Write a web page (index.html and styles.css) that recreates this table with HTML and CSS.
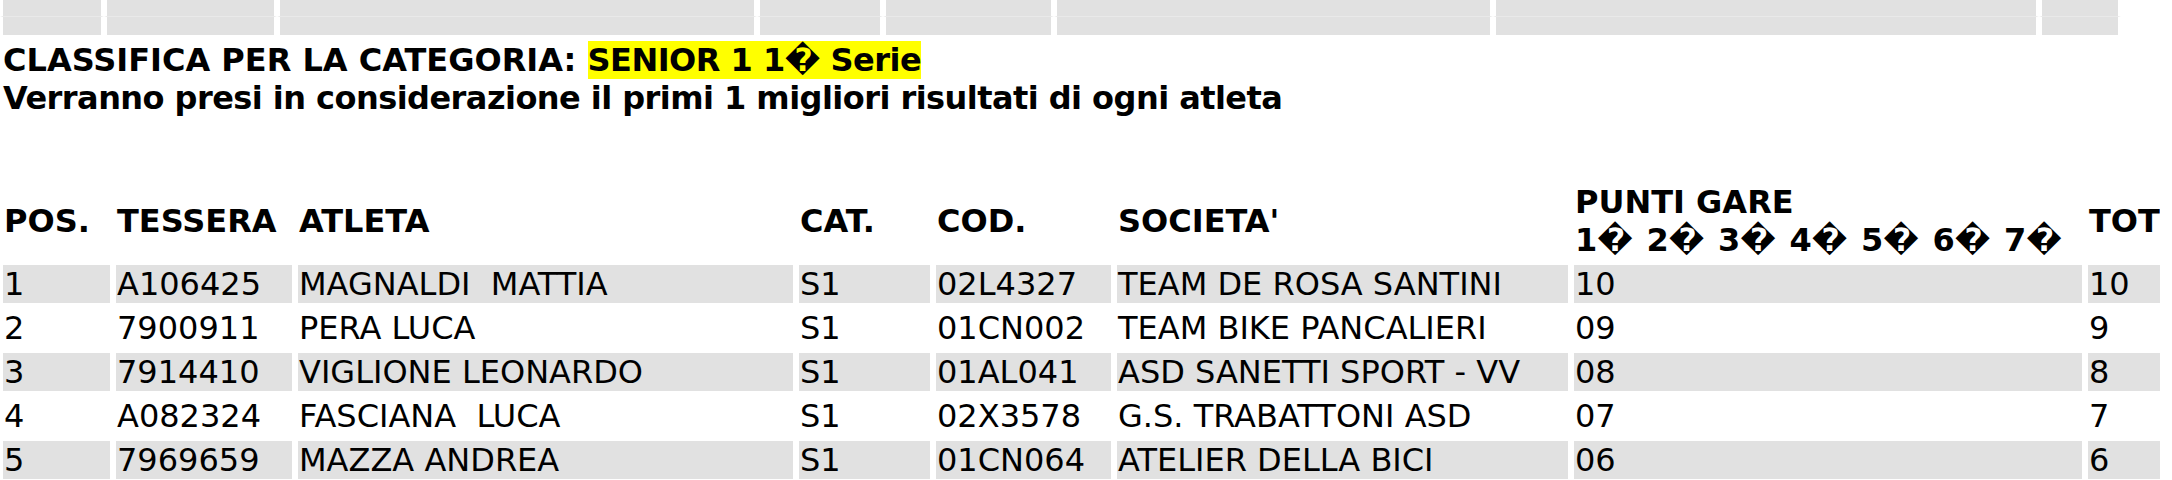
FILE: index.html
```html
<!DOCTYPE html>
<html lang="it">
<head>
<meta charset="utf-8">
<title>Classifica</title>
<link rel="stylesheet" href="styles.css">
</head>
<body>
<table class="top">
  <colgroup>
    <col class="t1"><col class="t2"><col class="t3"><col class="t4"><col class="t5"><col class="t6"><col class="t7"><col class="t8">
  </colgroup>
  <tr class="r1"><td></td><td></td><td></td><td></td><td></td><td></td><td></td><td></td></tr>
  <tr class="r2"><td></td><td></td><td></td><td></td><td></td><td></td><td></td><td></td></tr>
</table>

<div class="heading">
  <div class="line">CLASSIFICA PER LA CATEGORIA: <span class="hl">SENIOR 1 1� Serie</span></div>
  <div class="line tight">Verranno presi in considerazione il primi 1 migliori risultati di ogni atleta</div>
</div>

<table class="rank">
  <colgroup>
    <col class="c-pos"><col class="c-tes"><col class="c-atl"><col class="c-cat"><col class="c-cod"><col class="c-soc"><col class="c-pun"><col class="c-tot">
  </colgroup>
  <thead>
    <tr>
      <th>POS.</th>
      <th>TESSERA</th>
      <th>ATLETA</th>
      <th>CAT.</th>
      <th>COD.</th>
      <th>SOCIETA'</th>
      <th>PUNTI GARE<br><span class="races"><span class="race">1�</span><span class="race">2�</span><span class="race">3�</span><span class="race">4�</span><span class="race">5�</span><span class="race">6�</span><span class="race">7�</span></span></th>
      <th>TOT</th>
    </tr>
  </thead>
  <tbody>
    <tr class="odd"><td>1</td><td>A106425</td><td>MAGNALDI&nbsp; MATTIA</td><td>S1</td><td>02L4327</td><td>TEAM DE ROSA SANTINI</td><td>10</td><td>10</td></tr>
    <tr><td>2</td><td>7900911</td><td>PERA LUCA</td><td>S1</td><td>01CN002</td><td>TEAM BIKE PANCALIERI</td><td>09</td><td>9</td></tr>
    <tr class="odd"><td>3</td><td>7914410</td><td>VIGLIONE LEONARDO</td><td>S1</td><td>01AL041</td><td>ASD SANETTI SPORT - VV</td><td>08</td><td>8</td></tr>
    <tr><td>4</td><td>A082324</td><td>FASCIANA&nbsp; LUCA</td><td>S1</td><td>02X3578</td><td>G.S. TRABATTONI ASD</td><td>07</td><td>7</td></tr>
    <tr class="odd"><td>5</td><td>7969659</td><td>MAZZA ANDREA</td><td>S1</td><td>01CN064</td><td>ATELIER DELLA BICI</td><td>06</td><td>6</td></tr>
  </tbody>
</table>
</body>
</html>
```

FILE: styles.css
```css
html, body {
  margin: 0;
  padding: 0;
  background: #ffffff;
}

body {
  font-family: "DejaVu Sans", Verdana, sans-serif;
  font-size: 32px;
  color: #000000;
}

/* top strip of empty grey cells */
.top {
  border-collapse: separate;
  border-spacing: 0;
  table-layout: fixed;
  width: 2121px;
}
.top td {
  background: #e1e1e1;
  border: 3px solid #ffffff;
  border-top: 0;
  padding: 0;
}
.top .r1 td {
  height: 16px;
  border-bottom: 1px solid #e9e9e9;
}
.top .r2 td {
  height: 18px;
}
.t1 { width: 104px; }
.t2 { width: 173px; }
.t3 { width: 480px; }
.t4 { width: 126px; }
.t5 { width: 171px; }
.t6 { width: 439px; }
.t7 { width: 546px; }
.t8 { width: 82px; }

/* heading */
.heading {
  margin-top: 3px;
  padding-left: 3px;
  font-weight: bold;
  margin-bottom: 63px;
}
.line {
  white-space: nowrap;
}
.tight {
  letter-spacing: -0.55px;
}
.hl {
  background: #ffff00;
  letter-spacing: -0.5px;
}

/* ranking table */
.rank {
  border-collapse: separate;
  border-spacing: 0;
  table-layout: fixed;
  width: 2163px;
}
.rank th,
.rank td {
  border: 3px solid #ffffff;
  padding: 0 1px;
  text-align: left;
  white-space: nowrap;
  overflow: hidden;
}
.rank th {
  font-weight: bold;
  vertical-align: middle;
}
.rank td {
  height: 38px;
  vertical-align: middle;
}
.rank .odd td {
  background: #e1e1e1;
}
.c-pos { width: 113px; }
.c-tes { width: 182px; }
.c-atl { width: 501px; }
.c-cat { width: 137px; }
.c-cod { width: 181px; }
.c-soc { width: 457px; }
.c-pun { width: 514px; }
.c-tot { width: 78px; }

.races {
  display: flex;
}
.race {
  width: 71.5px;
}
```
